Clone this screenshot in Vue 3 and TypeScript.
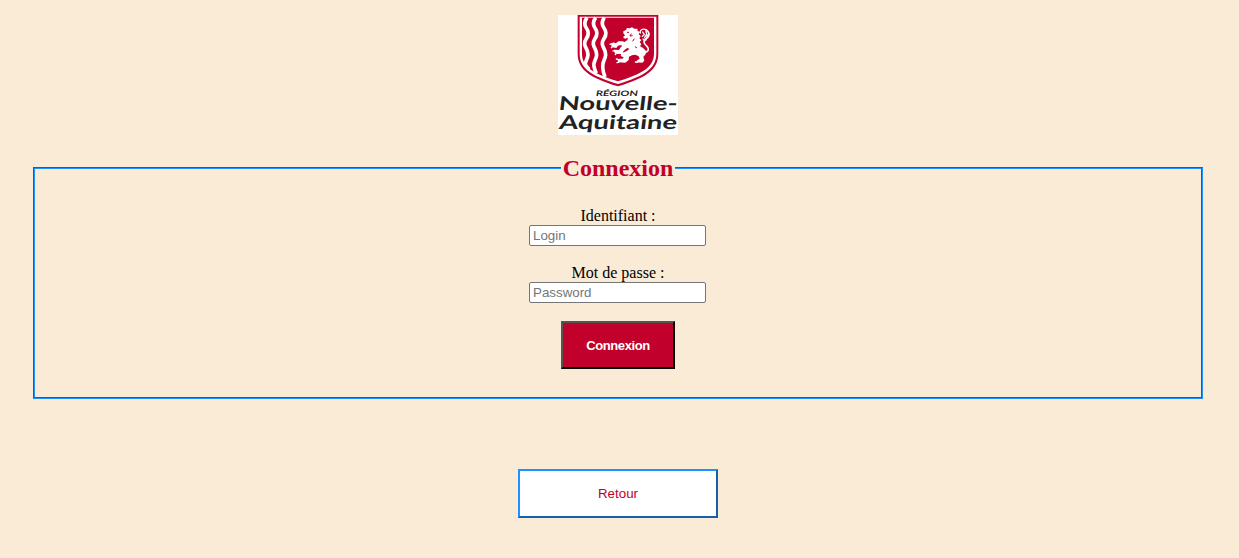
<script setup lang="ts">
import { ref } from 'vue'

const login = ref<string>('')
const password = ref<string>('')
</script>

<template>
  <main class="page">
    <svg class="logo" viewBox="0 0 120 120" role="img" aria-label="Région Nouvelle-Aquitaine">
      <rect width="120" height="120" fill="#fff" />
      <g transform="translate(17 -3) scale(.33333)">
        <path d="M8 9H250V125C250 184 190 203 129 223C68 203 8 184 8 125Z" fill="#c1002b" />
        <path d="M14 14H244V125C244 179 187 197 129 216C71 197 14 179 14 125Z" fill="#fff" />
        <path d="M21 17H237V125C237 173 183 190 129 208C75 190 21 173 21 125Z" fill="#c1002b" />
        <g fill="none" stroke="#fff" stroke-width="11">
          <path d="M36 17C26 31 28 40 34 48S43 67 34 80S29 101 35 112S40 133 34 145S32 160 42 172" />
          <path d="M62 17C52 31 54 40 60 48S69 67 60 80S55 101 61 112S66 133 60 145S56 166 64 184" />
          <path d="M88 17C78 31 81 40 87 48S96 67 87 80S82 101 88 112S93 133 87 145S82 174 90 195" />
        </g>
        <path
          d="M145 64L145 58L153 54L156 48L164 49L171 46L178 50L187 50L188 57L195 60L191 66L197 73L193 78L199 85L194 90L199 97L195 102L205 109L213 117L212 127L205 134L208 146L202 152L183 151L187 144L194 141L191 133L181 128L171 130L162 134L161 144L151 152L129 151L128 145L134 140L143 140L146 136L137 132L139 123L149 120L159 115L163 110L157 108L151 112L144 119L141 126L126 126L116 120L121 113L132 114L136 107L141 102L138 99L129 101L124 108L112 106L108 99L114 91L123 94L130 88L142 88L149 90L157 84L159 77L150 80L144 76L150 70Z"
          fill="#fff"
        />
        <g fill="none" stroke="#fff" stroke-linecap="round">
          <path d="M208 121C220 121 224 112 216 103C204 93 204 84 215 79C227 70 222 58 213 53" stroke-width="5" />
          <path d="M213 53C203 49 193 54 196 63M203 60L208 68L202 73M213 57L215 67L209 76M218 69L212 85L204 81" stroke-width="4" />
          <path d="M110 95L105 97M113 103L109 107M119 115L114 117M123 124L121 128M132 143L124 141M131 151L126 152M187 151L181 150" stroke-width="4" />
        </g>
        <path d="M156 61L162 61M169 65L165 72L173 71M178 80L173 88M180 104L186 108" fill="none" stroke="#c1002b" stroke-width="3" />
      </g>
      <g class="wordmark">
        <text class="region" transform="translate(37.5 80.7) skewX(-10)" textLength="42" lengthAdjust="spacingAndGlyphs">RÉGION</text>
        <text class="name" transform="translate(0 95.2) skewX(-7)" textLength="119" lengthAdjust="spacingAndGlyphs">Nouvelle-</text>
        <text class="name" transform="translate(0.5 114.2) skewX(-7)" textLength="118" lengthAdjust="spacingAndGlyphs">Aquitaine</text>
      </g>
    </svg>

    <form class="form" @submit.prevent>
      <fieldset class="panel">
        <legend class="title">Connexion</legend>
        <div class="field">
          <label for="login">Identifiant :</label>
          <input id="login" v-model="login" type="text" placeholder="Login" />
        </div>
        <div class="field">
          <label for="password">Mot de passe :</label>
          <input id="password" v-model="password" type="password" placeholder="Password" />
        </div>
        <button class="submit" type="submit">Connexion</button>
      </fieldset>
    </form>

    <button class="back" type="button">Retour</button>
  </main>
</template>

<style>
body {
  margin: 0;
  background: #faebd7;
}
</style>

<style scoped>
.page {
  box-sizing: border-box;
  width: 1236px;
  height: 558px;
  padding: 15px 33px 0;
  display: flex;
  flex-direction: column;
  align-items: center;
  font: 16px "Liberation Serif", "Times New Roman", serif;
  color: #000;
}

.logo {
  display: block;
  width: 120px;
  height: 120px;
  flex: none;
  overflow: visible;
}

.wordmark {
  font-family: Lato, "Open Sans", sans-serif;
  fill: #222;
}

.region {
  font-size: 7.5px;
  font-weight: 700;
}

.name {
  font-size: 19px;
  font-weight: 700;
}

.form {
  width: 100%;
  margin-top: 19px;
}

.panel {
  box-sizing: border-box;
  height: 245px;
  margin: 0;
  padding: 25px 12px 0;
  border: 2px groove #1e90ff;
  text-align: center;
}

.title {
  margin: 0 auto;
  padding: 0 2px;
  font-size: 24px;
  line-height: 28px;
  font-weight: 700;
  color: #c1002b;
}

.field {
  display: flex;
  flex-direction: column;
  align-items: center;
  margin-bottom: 18px;
}

.field label {
  line-height: 18px;
}

.field input {
  box-sizing: border-box;
  width: 177px;
  height: 21px;
  margin: 0 1px 0 0;
  padding: 1px 3px;
  border: 1px solid #767676;
  border-radius: 2px;
  background: #fff;
  font: 13.333px "Liberation Sans", Arial, sans-serif;
}

.field input::placeholder {
  color: #757575;
}

.submit,
.back {
  box-sizing: border-box;
  height: 48px;
  margin: 0;
  padding: 0;
  font: 13.333px "Liberation Sans", Arial, sans-serif;
}

.submit {
  width: 114px;
  border: 2px outset #000;
  background: #c1002b;
  color: #fff;
  font-size: 13px;
  font-weight: 700;
  letter-spacing: -0.4px;
}

.back {
  width: 200px;
  height: 49px;
  margin-top: 70px;
  border: 2px outset #1e90ff;
  background: #fff;
  color: #c1002b;
}
</style>
